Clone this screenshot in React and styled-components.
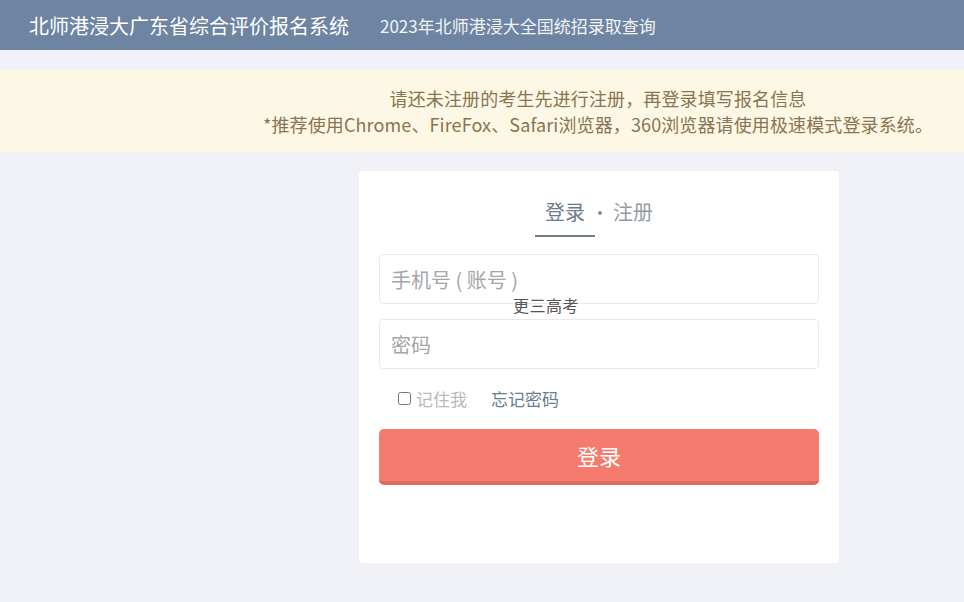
import React, { useState } from "react";
import styled, { createGlobalStyle } from "styled-components";

const GlobalStyle = createGlobalStyle`
  html, body {
    margin: 0;
    padding: 0;
    background: #eff1f6;
    font-family: "Noto Sans CJK SC", "Noto Sans", "Liberation Sans", sans-serif;
  }
`;

const App = () => {
  const [remember, setRemember] = useState(false);

  return (
    <>
      <GlobalStyle />
      <Header>
        <h1>北师港浸大广东省综合评价报名系统</h1>
        <a href="#query">2023年北师港浸大全国统招录取查询</a>
      </Header>
      {/* notice */}
      <Notice>
        <p>请还未注册的考生先进行注册，再登录填写报名信息</p>
        <p>*推荐使用Chrome、FireFox、Safari浏览器，360浏览器请使用极速模式登录系统。</p>
      </Notice>
      {/* end of notice */}
      <Main>
        <Card>
          <Tabs>
            <Tab active>登录</Tab>
            <Dot />
            <Tab>注册</Tab>
          </Tabs>
          <Input type="text" placeholder="手机号 ( 账号 )" />
          <Floating>更三高考</Floating>
          <Input type="password" placeholder="密码" />
          <Options>
            <label>
              <input
                type="checkbox"
                checked={remember}
                onChange={(e) => setRemember(e.target.checked)}
              />
              记住我
            </label>
            <a href="#forgot">忘记密码</a>
          </Options>
          <SubmitBtn type="button">登录</SubmitBtn>
        </Card>
      </Main>
    </>
  );
};

const Header = styled.header`
  height: 50px;
  background: #6e84a3;
  display: flex;
  align-items: center;
  padding-left: 29px;
  h1 {
    margin: 0;
    font-size: 20px;
    font-weight: normal;
    color: #fff;
  }
  a {
    margin-left: 31px;
    font-size: 17px;
    color: #f2f4f7;
    text-decoration: none;
  }
`;

const Notice = styled.section`
  margin-top: 20px;
  height: 82px;
  background: #fdf8e5;
  box-sizing: border-box;
  padding: 15px 0 0 232px;
  text-align: center;
  p {
    margin: 0;
    font-size: 18px;
    line-height: 26px;
    color: #8a7452;
    letter-spacing: 0.12px;
  }
`;

const Main = styled.main`
  display: flex;
  padding: 19px 0 0 359px;
`;

const Card = styled.div`
  position: relative;
  width: 480px;
  height: 392px;
  box-sizing: border-box;
  padding: 26px 20px 0;
  background: #fff;
  border-radius: 4px;
`;

const Tabs = styled.div`
  display: flex;
  justify-content: center;
  align-items: flex-start;
  margin-bottom: 17px;
`;

const Tab = styled.div`
  padding: 0 10px 8px;
  font-size: 20px;
  line-height: 30px;
  color: ${(p) => (p.active ? "#6c7c8e" : "#959ba3")};
  border-bottom: 2px solid ${(p) => (p.active ? "#6f7d87" : "transparent")};
  cursor: pointer;
`;

const Dot = styled.span`
  width: 4px;
  height: 4px;
  margin: 14px 1px 0 3px;
  border-radius: 50%;
  background: #8a8f96;
`;

const Input = styled.input`
  display: block;
  width: 100%;
  height: 50px;
  box-sizing: border-box;
  padding: 0 11px;
  margin-bottom: 15px;
  border: 1px solid #e8e9ec;
  border-radius: 4px;
  font-family: inherit;
  font-size: 20px;
  color: #555;
  outline: none;
  &::placeholder {
    color: #a6a6a6;
  }
`;

const Floating = styled.span`
  position: absolute;
  left: 154px;
  top: 122px;
  font-size: 16px;
  color: #555;
  letter-spacing: 0.5px;
`;

const Options = styled.div`
  display: flex;
  align-items: center;
  height: 30px;
  margin: -1px 0 16px;
  padding-left: 19px;
  font-size: 17px;
  label {
    display: flex;
    align-items: center;
    color: #b9b9b9;
    cursor: pointer;
  }
  input {
    width: 13px;
    height: 13px;
    margin: 0 5px 0 0;
  }
  a {
    margin-left: 24px;
    color: #6a7d8f;
    text-decoration: none;
  }
`;

const SubmitBtn = styled.button`
  display: block;
  width: 100%;
  height: 56px;
  border: none;
  border-bottom: 4px solid #e2675c;
  border-radius: 5px;
  background: #f57b6e;
  color: #fff;
  font-family: inherit;
  font-size: 22px;
  padding: 0;
  cursor: pointer;
`;

export default App;
